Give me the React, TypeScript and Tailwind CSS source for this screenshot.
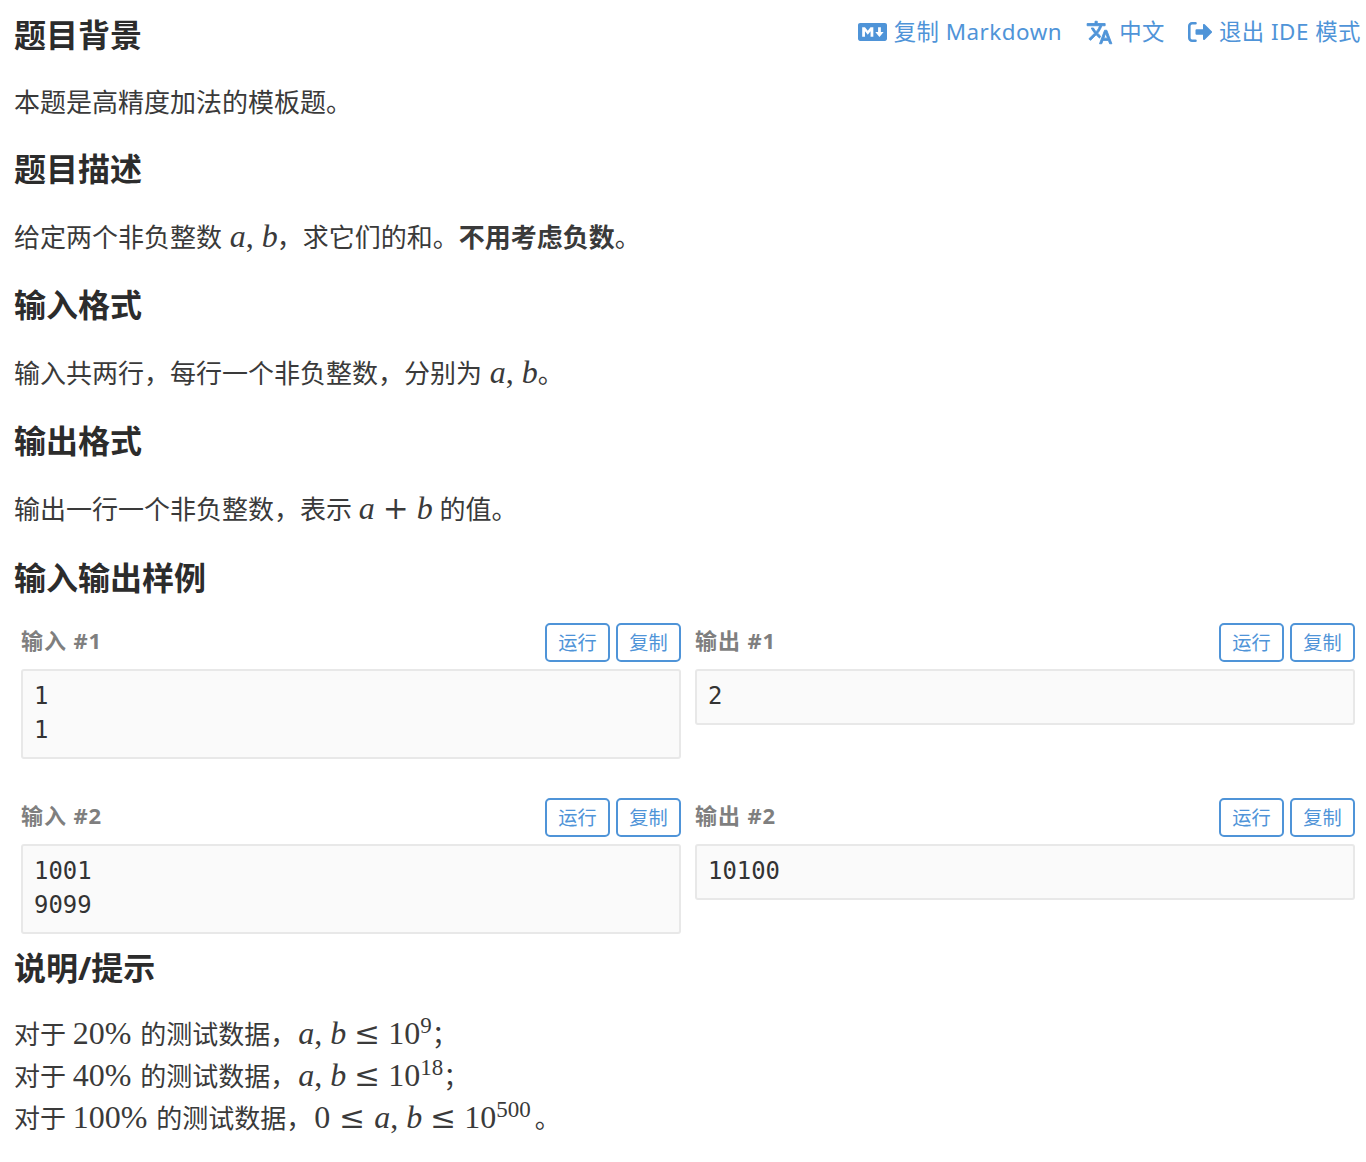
import React from "react";
import { FaMarkdown } from "react-icons/fa";

const cjk = "font-['Noto_Sans','Noto_Sans_CJK_SC',sans-serif]";

function H({ children }: { children: React.ReactNode }) {
  return <h2 className="text-[32px] leading-[40px] font-bold text-[#2c2c2c]">{children}</h2>;
}

function I({ children }: { children: React.ReactNode }) {
  return <span className="font-['Liberation_Serif',serif] italic text-[32px] leading-[0]">{children}</span>;
}

function R({ children }: { children: React.ReactNode }) {
  return <span className="font-['Liberation_Serif',serif] text-[32px] leading-[0]">{children}</span>;
}

function Op({ children }: { children: React.ReactNode }) {
  return <span className="font-['DejaVu_Serif',serif] text-[31px] leading-[0] mx-[8px]">{children}</span>;
}

function Sup({ children }: { children: React.ReactNode }) {
  return <sup className="font-['Liberation_Serif',serif] text-[23px] leading-[0] top-[-11px] relative align-baseline">{children}</sup>;
}

function Sample({ label, code }: { label: string; code: string[] }) {
  return (
    <div>
      <div className="flex justify-between items-start h-[39px]">
        <span className="text-[22px] leading-[34px] font-bold tracking-[0.9px] text-[#7f7f7f]">{label}</span>
        <div className="flex gap-[6px]">
          <button className="w-[65px] h-[39px] pt-[1px] border-2 border-[#4f94d8] rounded-[5px] text-[19.2px] leading-none text-[#4f94d8]">运行</button>
          <button className="w-[65px] h-[39px] pt-[1px] border-2 border-[#4f94d8] rounded-[5px] text-[19.2px] leading-none text-[#4f94d8]">复制</button>
        </div>
      </div>
      <pre className="mt-[7px] border-2 border-[#e8e8e8] bg-[#fafafa] rounded-[3px] px-[11px] pt-[8px] pb-[10px] font-['DejaVu_Sans_Mono',monospace] text-[23.9px] leading-[34px] text-[#333]">
        {code.join("\n")}
      </pre>
    </div>
  );
}

function TranslateIcon() {
  return (
    <svg viewBox="0 0 24 24" className="w-[27px] h-[27px]" fill="currentColor" stroke="currentColor" strokeWidth="0.8">
      <path d="M12.87 15.07l-2.54-2.51.03-.03c1.74-1.94 2.98-4.17 3.71-6.53H17V4h-7V2H8v2H1v1.99h11.17C11.5 7.92 10.44 9.75 9 11.35 8.07 10.32 7.3 9.19 6.69 8h-2c.73 1.63 1.73 3.17 2.98 4.56l-5.09 5.02L4 19l5-5 3.11 3.11.76-2.04zM18.5 10h-2L12 22h2l1.12-3h4.75L21 22h2l-4.5-12zm-2.62 7l1.62-4.33L19.12 17h-3.24z" />
    </svg>
  );
}

function ExitIcon() {
  return (
    <svg viewBox="0 0 24 20" className="w-[24px] h-[20px]">
      <path d="M7.5 1.3H4A2.7 2.7 0 0 0 1.3 4v12A2.7 2.7 0 0 0 4 18.7h3.5" fill="none" stroke="currentColor" strokeWidth="2.6" strokeLinecap="round" />
      <path d="M7.5 8.2a1 1 0 0 1 1-1H15V2.9a1 1 0 0 1 1.7-.7l7 7a1.1 1.1 0 0 1 0 1.6l-7 7a1 1 0 0 1-1.7-.7v-4.3H8.5a1 1 0 0 1-1-1z" fill="currentColor" />
    </svg>
  );
}

export default function App() {
  return (
    <div className={`${cjk} bg-white w-[1366px] h-[1162px] pl-[14px] pr-[5px] pt-[15px] text-[26px] text-[#3a3a3a] overflow-hidden`}>
      <div className="flex justify-between items-start">
        <H>题目背景</H>
        <div className="flex items-center text-[22.4px] leading-[34px] tracking-[0.5px] text-[#4f94d8]">
          <span className="flex items-center gap-[7px]"><FaMarkdown className="w-[29px] h-[24px]" />复制 Markdown</span>
          <span className="flex items-center gap-[6px] ml-[24px]"><TranslateIcon />中文</span>
          <span className="flex items-center gap-[7px] ml-[23px]"><ExitIcon />退出 IDE 模式</span>
        </div>
      </div>
      <p className="mt-[26px] h-[42px] leading-[42px]">本题是高精度加法的模板题。</p>
      <div className="mt-[26px]"><H>题目描述</H></div>
      <p className="mt-[26px] h-[44px] leading-[44px]">给定两个非负整数 <span className="ml-[1px]"><I>a</I></span><R>, </R><span className="mr-[-1px]"><I>b</I></span>，求它们的和。<strong>不用考虑负数</strong>。</p>
      <div className="mt-[26px]"><H>输入格式</H></div>
      <p className="mt-[26px] h-[44px] leading-[44px]">输入共两行，每行一个非负整数，分别为 <span className="ml-[1px]"><I>a</I></span><R>, </R><I>b</I>。</p>
      <div className="mt-[26px]"><H>输出格式</H></div>
      <p className="mt-[26px] h-[44px] leading-[44px]">输出一行一个非负整数，表示 <I>a</I><Op>+</Op><I>b</I> 的值。</p>
      <div className="mt-[27px]"><H>输入输出样例</H></div>
      <div className="ml-[7px] mr-[6px] mt-[25px] grid grid-cols-2 gap-x-[14px] gap-y-[39px] items-start">
        <div className="h-[136px]"><Sample label="输入 #1" code={["1", "1"]} /></div>
        <div className="h-[136px]"><Sample label="输出 #1" code={["2"]} /></div>
        <div className="h-[136px]"><Sample label="输入 #2" code={["1001", "9099"]} /></div>
        <div className="h-[136px]"><Sample label="输出 #2" code={["10100"]} /></div>
      </div>
      <div className="mt-[14px]"><H>说明/提示</H></div>
      <div className="mt-[25px] leading-[42px]">
        <p>对于 <span className="mr-[2px]"><R>20%</R></span> 的测试数据，<span className="ml-[2px]"><I>a</I></span><R>, </R><I>b</I><Op>≤</Op><R>10</R><Sup>9</Sup>；</p>
        <p>对于 <span className="mr-[2px]"><R>40%</R></span> 的测试数据，<span className="ml-[2px]"><I>a</I></span><R>, </R><I>b</I><Op>≤</Op><R>10</R><Sup>18</Sup>；</p>
        <p>对于 <span className="mr-[2px]"><R>100%</R></span> 的测试数据，<span className="ml-[2px]"><R>0</R></span><span className="ml-[1px] mr-[1px]"><Op>≤</Op></span><I>a</I><R>, </R><I>b</I><Op>≤</Op><R>10</R><span className="mr-[4px]"><Sup>500</Sup></span>。</p>
      </div>
    </div>
  );
}
